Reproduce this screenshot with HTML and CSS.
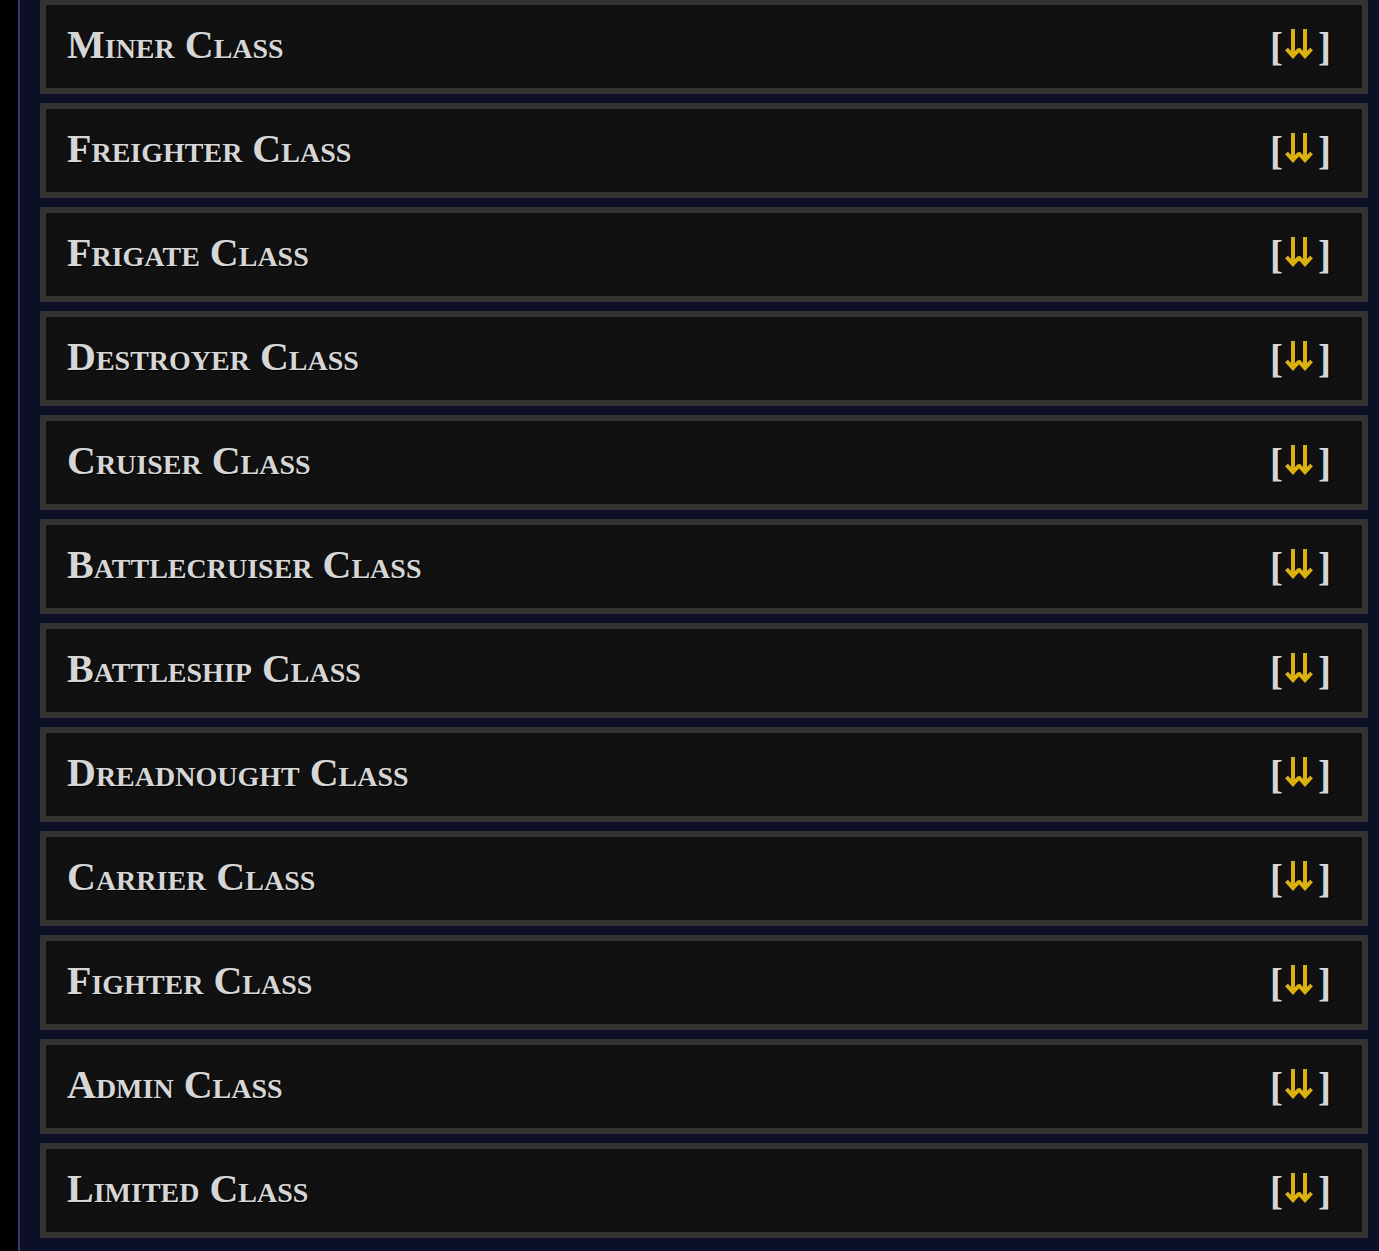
FILE: index.html
```html
<!DOCTYPE html>
<html>
<head>
<meta charset="utf-8">
<link rel="stylesheet" href="styles.css">
</head>
<body>
<div class="page">
  <div class="list">
    <div class="row"><span class="title">Miner Class</span><span class="toggle">[<svg class="arr" viewBox="0 0 30 30"><path d="M8 0V28M20 0V28M1.5 20L8 27L14.5 20M13.5 20L20 27L26.5 20"/></svg>]</span></div>
    <div class="row"><span class="title">Freighter Class</span><span class="toggle">[<svg class="arr" viewBox="0 0 30 30"><path d="M8 0V28M20 0V28M1.5 20L8 27L14.5 20M13.5 20L20 27L26.5 20"/></svg>]</span></div>
    <div class="row"><span class="title">Frigate Class</span><span class="toggle">[<svg class="arr" viewBox="0 0 30 30"><path d="M8 0V28M20 0V28M1.5 20L8 27L14.5 20M13.5 20L20 27L26.5 20"/></svg>]</span></div>
    <div class="row"><span class="title">Destroyer Class</span><span class="toggle">[<svg class="arr" viewBox="0 0 30 30"><path d="M8 0V28M20 0V28M1.5 20L8 27L14.5 20M13.5 20L20 27L26.5 20"/></svg>]</span></div>
    <div class="row"><span class="title">Cruiser Class</span><span class="toggle">[<svg class="arr" viewBox="0 0 30 30"><path d="M8 0V28M20 0V28M1.5 20L8 27L14.5 20M13.5 20L20 27L26.5 20"/></svg>]</span></div>
    <div class="row"><span class="title">Battlecruiser Class</span><span class="toggle">[<svg class="arr" viewBox="0 0 30 30"><path d="M8 0V28M20 0V28M1.5 20L8 27L14.5 20M13.5 20L20 27L26.5 20"/></svg>]</span></div>
    <div class="row"><span class="title">Battleship Class</span><span class="toggle">[<svg class="arr" viewBox="0 0 30 30"><path d="M8 0V28M20 0V28M1.5 20L8 27L14.5 20M13.5 20L20 27L26.5 20"/></svg>]</span></div>
    <div class="row"><span class="title">Dreadnought Class</span><span class="toggle">[<svg class="arr" viewBox="0 0 30 30"><path d="M8 0V28M20 0V28M1.5 20L8 27L14.5 20M13.5 20L20 27L26.5 20"/></svg>]</span></div>
    <div class="row"><span class="title">Carrier Class</span><span class="toggle">[<svg class="arr" viewBox="0 0 30 30"><path d="M8 0V28M20 0V28M1.5 20L8 27L14.5 20M13.5 20L20 27L26.5 20"/></svg>]</span></div>
    <div class="row"><span class="title">Fighter Class</span><span class="toggle">[<svg class="arr" viewBox="0 0 30 30"><path d="M8 0V28M20 0V28M1.5 20L8 27L14.5 20M13.5 20L20 27L26.5 20"/></svg>]</span></div>
    <div class="row"><span class="title">Admin Class</span><span class="toggle">[<svg class="arr" viewBox="0 0 30 30"><path d="M8 0V28M20 0V28M1.5 20L8 27L14.5 20M13.5 20L20 27L26.5 20"/></svg>]</span></div>
    <div class="row"><span class="title">Limited Class</span><span class="toggle">[<svg class="arr" viewBox="0 0 30 30"><path d="M8 0V28M20 0V28M1.5 20L8 27L14.5 20M13.5 20L20 27L26.5 20"/></svg>]</span></div>
  </div>
</div>
</body>
</html>
```
FILE: styles.css
```css
html, body {
  margin: 0;
  padding: 0;
  background: #000;
  height: 100%;
  overflow: hidden;
}
.page {
  margin-left: 18px;
  border-left: 2px solid #353a5e;
  background: #0c1026;
  min-height: 100%;
  padding: 0 11px 20px 20px;
}
.list {
  display: flex;
  flex-direction: column;
  gap: 9px;
  margin-top: -1px;
}
.row {
  height: 83px;
  box-sizing: content-box;
  border: 6px solid #323230;
  background: #111111;
  display: flex;
  align-items: center;
  justify-content: space-between;
  padding: 0 31px 0 21px;
  font-family: "Liberation Serif", "Times New Roman", serif;
  font-weight: bold;
  font-size: 40px;
  color: #d6d6d6;
}
.title {
  font-variant: small-caps;
  text-shadow: 1px 1px 1px #000;
  margin-top: -4px;
}
.toggle {
  display: flex;
  align-items: center;
  color: #d6d6d6;
  font-size: 39px;
  text-shadow: 1px 1px 1px #000;
  margin-top: -1px;
}
.arr {
  width: 30px;
  height: 30px;
  fill: none;
  stroke: #dcb010;
  stroke-width: 4;
  stroke-linecap: butt;
  stroke-linejoin: miter;
  margin: -4px 3px 0 2px;
}
```
